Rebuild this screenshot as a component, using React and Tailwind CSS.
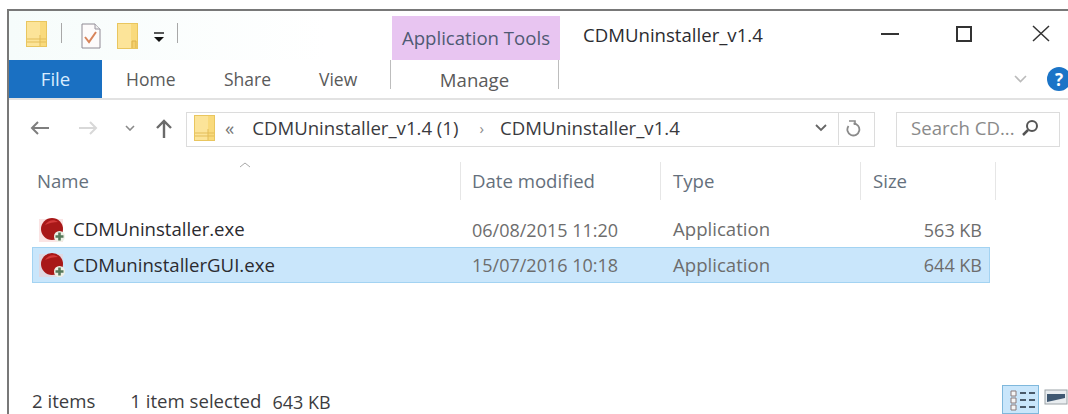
import React from "react";

const font = { fontFamily: '"Open Sans", "Noto Sans", sans-serif' };

function Folder({ className = "", tab = false }) {
  return (
    <svg className={className} viewBox="0 0 21 26">
      <rect x="0.5" y="0.5" width="20" height="25" fill="#f9da7c" stroke="#e9c65f" />
      <rect x="1" y="1" width="13" height="24" fill="#fce499" />
      {tab ? (
        <path d="M15 25V18h4v7" fill="#f4cf6a" stroke="#dcb24a" />
      ) : (
        <path d="M1 18H20M1 21H20M14 14V25" stroke="#e3bd58" strokeWidth="1" fill="none" />
      )}
    </svg>
  );
}

function Properties({ className = "" }) {
  return (
    <svg className={className} viewBox="0 0 20 26">
      <path d="M1 1H14L19 6V25H1Z" fill="#fdfbfb" stroke="#8f8a94" />
      <path d="M14 1V6H19" fill="#eee" stroke="#9a96a0" />
      <path d="M4 14L8 19L15 9" fill="none" stroke="#d8845a" strokeWidth="2" />
    </svg>
  );
}

function AppIcon() {
  return (
    <svg className="w-[27px] h-[26px] shrink-0" viewBox="0 0 27 26">
      <rect x="0" y="2" width="24" height="23" fill="#f6c9c9" opacity="0.5" />
      <circle cx="13" cy="12" r="11" fill="#a81818" />
      <path d="M6 8C9 3 15 2 19 5C15 5 10 6 6 8Z" fill="#d43a3a" />
      <circle cx="20.500" cy="19.500" r="5.500" fill="#eef0e6" />
      <path d="M20.500 15.500V23.500M16.500 19.500H24.500" stroke="#56785a" strokeWidth="2.600" />
    </svg>
  );
}

function Row({ name, date, size, selected }) {
  return (
    <div
      className={`flex items-center w-[958px] border ${
        selected ? "h-[36px] bg-[#c9e6fb] border-[#a3d3f2]" : "h-[35px] border-transparent"
      }`}
    >
      <div className="flex items-center w-[439px] pl-[6px] gap-[7px] text-[#2b2b30]">
        <AppIcon />
        <span>{name}</span>
      </div>
      <div className="w-[201px] text-[18px] text-[#6d6d6d]">{date}</div>
      <div className="w-[200px] text-[#6d6d6d]">Application</div>
      <div className="w-[109px] text-right text-[18px] text-[#6d6d6d]">{size}</div>
    </div>
  );
}

function HeaderCell({ width, label }) {
  return <div className={`h-[38px] flex items-center border-r border-[#e6e6e6] ${width}`}>{label}</div>;
}

export default function App() {
  return (
    <div
      className="w-[1068px] h-[414px] overflow-hidden bg-white pl-[7px] pt-[9px] text-[18.6px] leading-none antialiased"
      style={font}
    >
      <div className="h-[405px] w-[1061px] overflow-hidden border-l-2 border-t-2 border-[#787878] flex flex-col">
        {/* Title bar with quick access toolbar */}
        <div className="flex h-[49px] shrink-0 pl-[17px] bg-gradient-to-r from-[#f6fcfb] to-white to-[30%]">
          <Folder className="w-[21px] h-[26px] mt-[10px]" />
          <div className="w-px h-[20px] bg-[#a8a8a8] mt-[12px] ml-[14px]" />
          <Properties className="w-[20px] h-[26px] mt-[12px] ml-[19px]" />
          <Folder tab className="w-[21px] h-[26px] mt-[12px] ml-[16px]" />
          <svg className="w-[12px] h-[11px] mt-[21px] ml-[15px]" viewBox="0 0 12 11">
            <path d="M1 1H11" stroke="#222" strokeWidth="1.5" />
            <path d="M1 5H11L6 10Z" fill="#111" />
          </svg>
          <div className="w-px h-[20px] bg-[#a8a8a8] mt-[12px] ml-[12px]" />
          <div className="w-[168px] h-[44px] mt-[5px] ml-[214px] bg-[#e8c5f1] flex items-center justify-center text-[#4f5a73] whitespace-nowrap">
            Application Tools
          </div>
          <div className="ml-[23px] mt-[15px] text-[#2c2c30] whitespace-nowrap w-[270px]">CDMUninstaller_v1.4</div>
          <div className="w-[18px] h-[2px] bg-[#333] mt-[22px] ml-[28px]" />
          <div className="w-[16px] h-[16px] border-2 border-[#333] mt-[15px] ml-[57px]" />
          <svg className="w-[18px] h-[17px] mt-[14px] ml-[60px]" viewBox="0 0 18 17">
            <path d="M1 1L17 16M17 1L1 16" stroke="#333" strokeWidth="1.5" />
          </svg>
        </div>

        {/* Ribbon tabs */}
        <div className="flex h-[40px] shrink-0 border-b-2 border-[#e2e2e2] text-[#5a5a5a] text-[17.5px]">
          <div className="w-[93px] h-[38px] shrink-0 bg-[#1a70c2] text-[#d9ecff] text-[18.6px] flex items-center justify-center">File</div>
          <div className="w-[48px] shrink-0 ml-[24px] pt-[11px]">Home</div>
          <div className="w-[48px] shrink-0 ml-[50px] pt-[11px]">Share</div>
          <div className="w-[42px] shrink-0 ml-[47px] pt-[11px]">View</div>
          <div className="w-[169px] h-[29px] shrink-0 ml-[29px] border-x border-[#bdbdbd] flex justify-center pt-[11px] text-[18.6px]">
            Manage
          </div>
          <svg className="w-[13px] h-[8px] mt-[15px] ml-[455px] shrink-0" viewBox="0 0 13 8">
            <path d="M1 1L6.500 6.500L12 1" fill="none" stroke="#bbb" strokeWidth="1.6" />
          </svg>
          <div className="w-[24px] h-[24px] rounded-full bg-[#1b74c7] text-white text-[17px] font-bold flex items-center justify-center mt-[7px] ml-[20px] shrink-0">
            ?
          </div>
        </div>

        {/* Navigation and address bar */}
        <div className="flex items-center h-[36px] mt-[11px] shrink-0 text-[#3a3a3e]">
          <svg className="w-[20px] h-[14px] ml-[21px] mb-[2px]" viewBox="0 0 20 14">
            <path d="M19 7H2M8 1L2 7L8 13" fill="none" stroke="#7e7e7e" strokeWidth="2" />
          </svg>
          <svg className="w-[20px] h-[14px] ml-[28px] mb-[2px]" viewBox="0 0 20 14">
            <path d="M1 7H18M12 1L18 7L12 13" fill="none" stroke="#d8d8d8" strokeWidth="2" />
          </svg>
          <svg className="w-[10px] h-[6px] ml-[27px] mb-[2px]" viewBox="0 0 10 6">
            <path d="M1 1L5 5L9 1" fill="none" stroke="#8a8a8a" strokeWidth="1.6" />
          </svg>
          <svg className="w-[18px] h-[19px] ml-[20px] mb-[2px]" viewBox="0 0 18 19">
            <path d="M9 19V2M2 9L9 2L16 9" fill="none" stroke="#6a6a6a" strokeWidth="2.400" />
          </svg>
          <div className="flex items-center w-[689px] h-[35px] ml-[13px] pb-[2px] border border-[#dcdcdc]">
            <Folder className="w-[21px] h-[26px] ml-[7px]" />
            <span className="ml-[10px] text-[#777]">«</span>
            <span className="ml-[18px] whitespace-nowrap">CDMUninstaller_v1.4 (1)</span>
            <span className="ml-[21px] text-[#8a8a8a] text-[15px]">›</span>
            <span className="ml-[16px] whitespace-nowrap">CDMUninstaller_v1.4</span>
            <svg className="w-[12px] h-[8px] ml-[135px] shrink-0" viewBox="0 0 12 8">
              <path d="M1 1L6 6L11 1" fill="none" stroke="#666" strokeWidth="1.800" />
            </svg>
            <div className="w-px h-[33px] bg-[#dcdcdc] ml-[11px] shrink-0" />
            <svg className="w-[15px] h-[17px] ml-[7px] shrink-0" viewBox="0 0 15 17">
              <path d="M7.500 3.500A6 6 0 1 1 2.500 6" fill="none" stroke="#8a8a8a" strokeWidth="1.800" />
              <path d="M3 1H9V5" fill="none" stroke="#8a8a8a" strokeWidth="1.600" />
            </svg>
          </div>
          <div className="flex items-center w-[164px] h-[35px] ml-[21px] pb-[2px] border border-[#dcdcdc] pl-[14px] text-[#8a8a8a]">
            <span className="whitespace-nowrap">Search CD...</span>
            <svg className="w-[18px] h-[18px] ml-[6px] shrink-0" viewBox="0 0 18 18">
              <circle cx="11" cy="7" r="5" fill="none" stroke="#555" strokeWidth="2" />
              <path d="M7 11L2 16" stroke="#555" strokeWidth="2.500" />
            </svg>
          </div>
        </div>

        {/* Column headers */}
        <div className="relative flex pl-[28px] mt-[15px] shrink-0 text-[#65707c]">
          <svg className="absolute left-[230px] top-[0px] w-[12px] h-[6px]" viewBox="0 0 12 6">
            <path d="M1 5L6 1L11 5" fill="none" stroke="#a8a8a8" />
          </svg>
          <HeaderCell width="w-[424px]" label="Name" />
          <HeaderCell width="w-[200px] pl-[11px]" label="Date modified" />
          <HeaderCell width="w-[200px] pl-[12px]" label="Type" />
          <HeaderCell width="w-[135px] pl-[12px]" label="Size" />
        </div>

        {/* File list */}
        <div className="flex flex-col ml-[23px] mt-[12px] shrink-0">
          <Row name="CDMUninstaller.exe" date="06/08/2015 11:20" size="563 KB" />
          <Row name="CDMuninstallerGUI.exe" date="15/07/2016 10:18" size="644 KB" selected />
        </div>

        {/* Status bar */}
        <div className="flex items-end flex-1 text-[#3c3c40] pl-[23px]">
          <span className="whitespace-nowrap mb-[3px]">2 items</span>
          <span className="whitespace-nowrap ml-[35px] mb-[3px]">1 item selected</span>
          <span className="whitespace-nowrap ml-[11px] mb-[3px] text-[18px]">643 KB</span>
          <svg className="w-[37px] h-[29px] ml-[671px] shrink-0" viewBox="0 0 37 29">
            <rect x="0.500" y="0.500" width="36" height="28" fill="#c9e6fb" stroke="#7fb8dc" />
            <path d="M9 6h5v5H9zM9 13h5v5H9zM9 20h5v5H9z" fill="#f5f5f5" stroke="#8a7a7a" />
            <path d="M18 8h6M27 8h6M18 15h6M27 15h6M18 22h6M27 22h6" stroke="#4a5a6a" strokeWidth="2" />
          </svg>
          <svg className="w-[24px] h-[16px] ml-[5px] mb-[9px] shrink-0" viewBox="0 0 24 16">
            <rect x="1" y="1" width="22" height="14" fill="#e9edf0" stroke="#9ca3a8" />
            <path d="M3 5H21V9L3 13Z" fill="#3f5872" />
          </svg>
        </div>
      </div>
    </div>
  );
}
